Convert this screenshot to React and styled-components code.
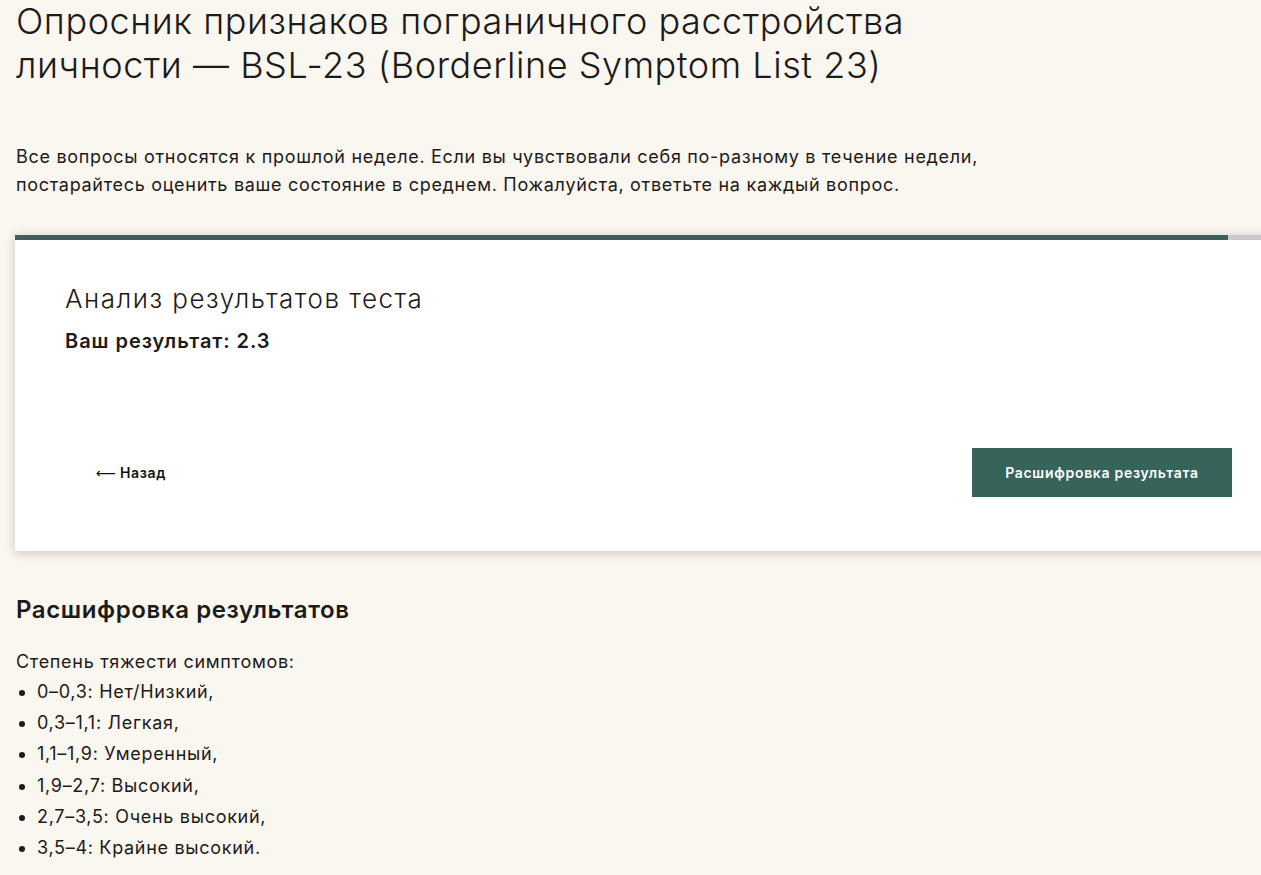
import React from "react";
import styled, { createGlobalStyle } from "styled-components";

const GlobalStyle = createGlobalStyle`
  body {
    margin: 0;
    background: #faf6f0;
    color: #1c1b1a;
    font-family: Inter, "Noto Sans", sans-serif;
    letter-spacing: 0.7px;
    overflow-x: hidden;
  }
`;

const Page = styled.main`
  padding: 0 0 40px 16px;
`;

const Title = styled.h1`
  margin: 0;
  font-size: 36px;
  font-weight: 300;
  line-height: 43.5px;
  letter-spacing: 0.55px;
  max-width: 960px;
`;

const Lead = styled.p`
  margin: 56px 0 0;
  font-size: 18px;
  line-height: 28px;
  max-width: 1000px;
`;

const Card = styled.section`
  margin: 36px -21px 0 -1px;
  background: #fff;
  box-shadow: 0 2px 10px rgba(60, 50, 40, 0.25);
`;

const Progress = styled.div`
  height: 5px;
  background: #c9c9c9;

  div {
    height: 100%;
    background: #36635a;
  }
`;

const CardBody = styled.div`
  padding: 43px 50px 54px 50px;
`;

const CardTitle = styled.h2`
  margin: 0;
  font-size: 26px;
  font-weight: 300;
  line-height: 32px;
  letter-spacing: 1.5px;
`;

const Score = styled.p`
  margin: 14px 0 0;
  font-size: 20px;
  font-weight: 600;
  line-height: 24px;
  letter-spacing: 0.95px;
`;

const Actions = styled.div`
  display: flex;
  justify-content: space-between;
  align-items: center;
  margin-top: 95px;
`;

const BackButton = styled.button`
  display: flex;
  align-items: center;
  gap: 4px;
  border: 0;
  background: none;
  padding: 0 31px;
  font-family: inherit;
  font-size: 14px;
  font-weight: 600;
  letter-spacing: 0.6px;
  color: #111;
  cursor: pointer;
`;

const Arrow = styled.span`
  font-family: "DejaVu Sans", sans-serif;
  font-weight: 400;
  font-size: 14px;
  letter-spacing: 0;
`;

const PrimaryButton = styled.button`
  width: 260px;
  height: 49px;
  border: 0;
  background: #36635a;
  color: #fff;
  font-family: inherit;
  font-size: 14px;
  font-weight: 600;
  letter-spacing: 0.7px;
  cursor: pointer;
`;

const Heading = styled.h2`
  margin: 44px 0 0;
  font-size: 24px;
  font-weight: 600;
  line-height: 30px;
  letter-spacing: 0.6px;
`;

const Text = styled.p`
  margin: 23px 0 0;
  font-size: 18px;
  line-height: 28px;
`;

const List = styled.ul`
  margin: 0;
  padding-left: 21px;
  font-size: 18px;
  line-height: 31.2px;
`;

const levels = [
  "0–0,3: Нет/Низкий,",
  "0,3–1,1: Легкая,",
  "1,1–1,9: Умеренный,",
  "1,9–2,7: Высокий,",
  "2,7–3,5: Очень высокий,",
  "3,5–4: Крайне высокий.",
];

export default function App() {
  const progress = 95.7;
  return (
    <>
      <GlobalStyle />
      <Page>
        <Title>
          Опросник признаков пограничного расстройства
          <br />
          личности — BSL-23 (Borderline Symptom List 23)
        </Title>
        <Lead>
          Все вопросы относятся к прошлой неделе. Если вы чувствовали себя
          по-разному в течение недели,
          <br />
          постарайтесь оценить ваше состояние в среднем. Пожалуйста, ответьте на
          каждый вопрос.
        </Lead>

        <Card>
          <Progress>
            <div style={{ width: `${progress}%` }} />
          </Progress>
          <CardBody>
            <CardTitle>Анализ результатов теста</CardTitle>
            <Score>Ваш результат: 2.3</Score>
            <Actions>
              <BackButton>
                <Arrow>⟵</Arrow>
                Назад
              </BackButton>
              <PrimaryButton>Расшифровка результата</PrimaryButton>
            </Actions>
          </CardBody>
        </Card>

        <Heading>Расшифровка результатов</Heading>
        <Text>Степень тяжести симптомов:</Text>
        <List>
          {levels.map((l) => (
            <li key={l}>{l}</li>
          ))}
        </List>
      </Page>
    </>
  );
}
